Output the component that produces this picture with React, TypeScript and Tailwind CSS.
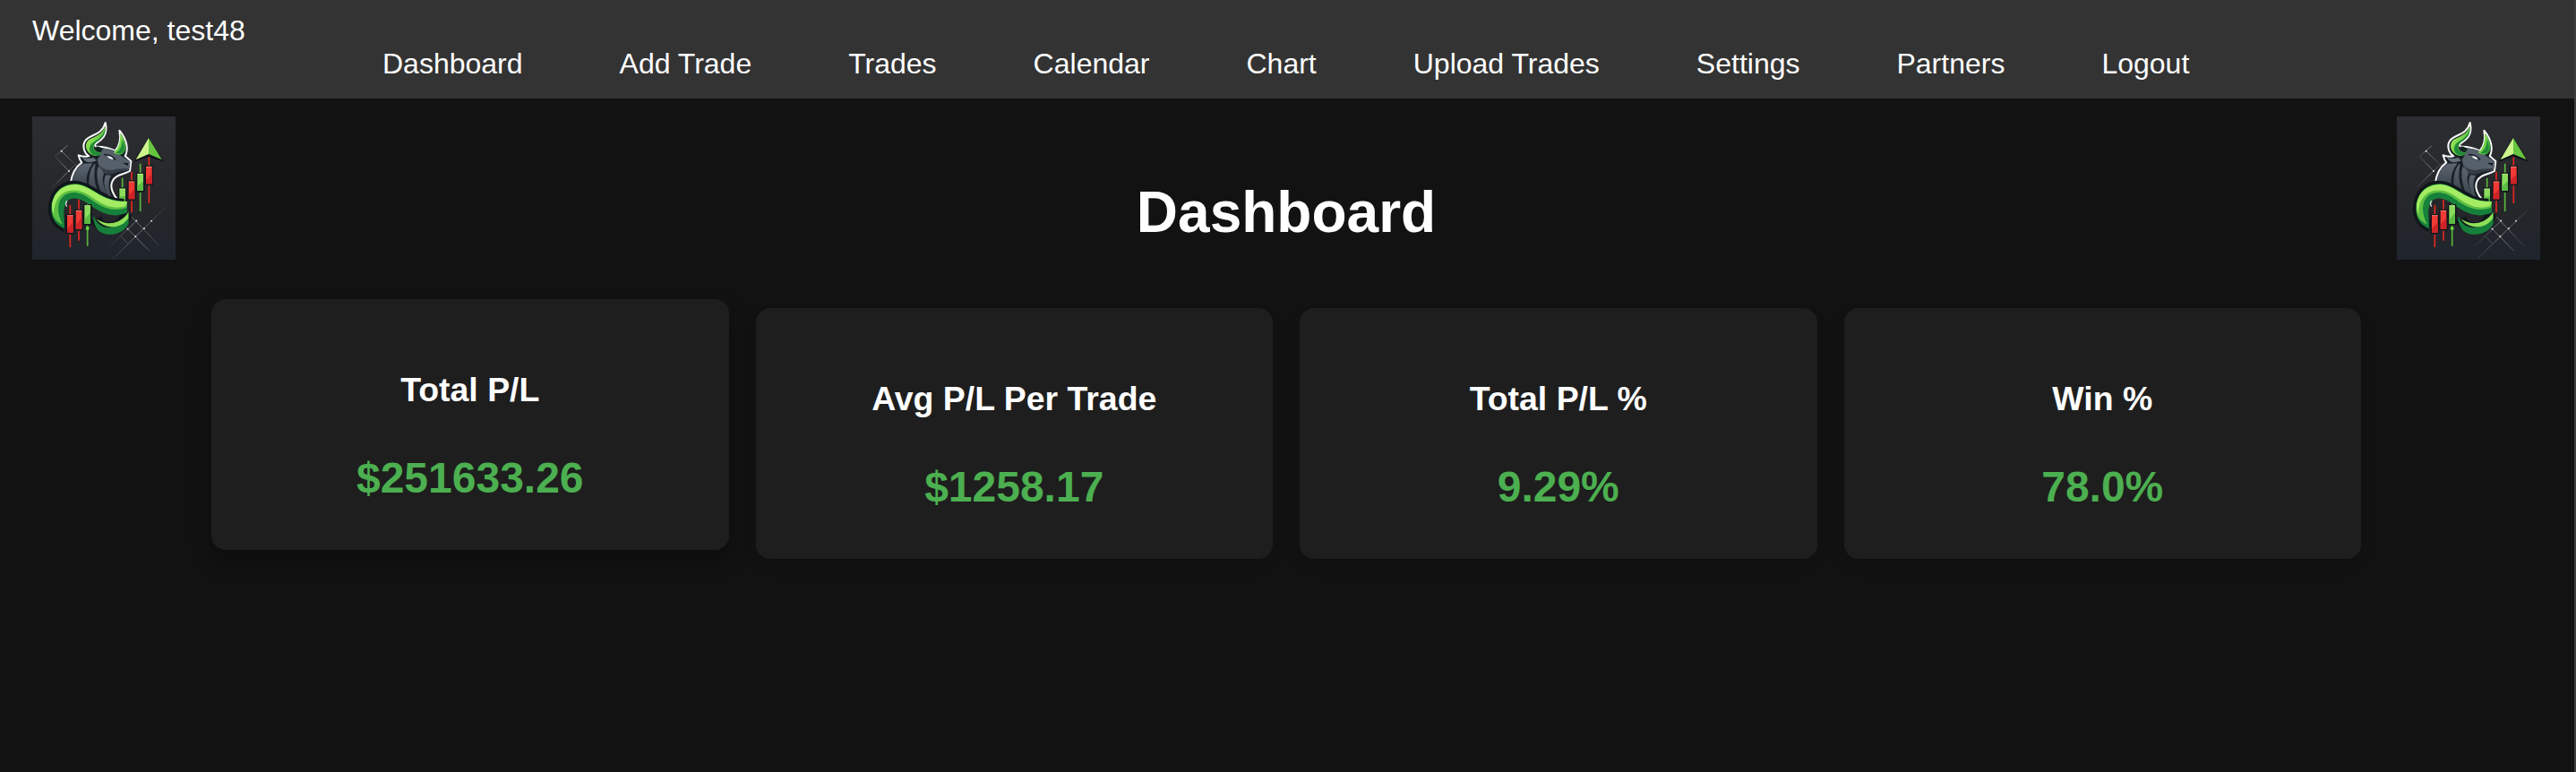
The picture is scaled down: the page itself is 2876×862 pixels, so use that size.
const links = [
  "Dashboard",
  "Add Trade",
  "Trades",
  "Calendar",
  "Chart",
  "Upload Trades",
  "Settings",
  "Partners",
  "Logout",
];

const stats = [
  { title: "Total P/L", value: "$251633.26", raised: true },
  { title: "Avg P/L Per Trade", value: "$1258.17", raised: false },
  { title: "Total P/L %", value: "9.29%", raised: false },
  { title: "Win %", value: "78.0%", raised: false },
];

// Candles of the logo: x centre, wick top, body top, body bottom, wick bottom
const backCandles = [
  { x: 302, top: 206, y1: 242, y2: 284, bottom: 284, up: true },
  { x: 333, top: 185, y1: 218, y2: 277, bottom: 322, up: false },
  { x: 362, top: 158, y1: 192, y2: 249, bottom: 318, up: true },
  { x: 391, top: 132, y1: 168, y2: 226, bottom: 291, up: false },
];

const frontCandles = [
  { x: 127, top: 297, y1: 331, y2: 389, bottom: 438, up: false },
  { x: 156, top: 278, y1: 315, y2: 377, bottom: 416, up: false },
  { x: 185, top: 296, y1: 298, y2: 360, bottom: 434, up: true },
];

function Candle({ x, top, y1, y2, bottom, up }: (typeof backCandles)[number]) {
  const fill = up ? "#8bdc5c" : "#f03a35";
  const shade = up ? "#5bbb42" : "#cf2428";
  return (
    <g>
      <rect x={x - 14} y={y1 - 4} width="28" height={y2 - y1 + 8} fill="#101419" />
      <path d={`M${x} ${top}V${y1 - 4}M${x} ${y2 + 6}V${bottom}`} stroke={up ? "#58b83c" : "#e3261f"} strokeWidth="5" />
      <rect x={x - 10} y={y1} width="20" height={y2 - y1} fill={fill} />
      <path d={`M${x - 10} ${y2 - 14}L${x + 10} ${y1 + 24}V${y2}H${x - 10}Z`} fill={shade} />
      <path d={`M${x - 10} ${y1 + 1}H${x + 10}`} stroke={up ? "#c9f2a0" : "#ffa39b"} strokeWidth="2" />
    </g>
  );
}

function Logo() {
  return (
    <svg viewBox="0 0 480 480" className="size-40 shrink-0">
      <defs>
        <linearGradient id="bg" x1="0" y1="0" x2="0" y2="1">
          <stop offset="0" stopColor="#2c2d30" />
          <stop offset="0.7" stopColor="#25262a" />
          <stop offset="1" stopColor="#1f252d" />
        </linearGradient>
        <linearGradient id="horn" x1="0" y1="0" x2="1" y2="0.8">
          <stop offset="0" stopColor="#b6f567" />
          <stop offset="0.6" stopColor="#6fd046" />
          <stop offset="1" stopColor="#1f8a35" />
        </linearGradient>
        <linearGradient id="hide" x1="0" y1="0" x2="0" y2="1">
          <stop offset="0" stopColor="#5d6670" />
          <stop offset="1" stopColor="#3d4752" />
        </linearGradient>
        <linearGradient id="fade" x1="0" y1="0" x2="1" y2="0">
          <stop offset="0" stopColor="#8a9097" stopOpacity="0.2" />
          <stop offset="0.5" stopColor="#aab0b6" />
          <stop offset="1" stopColor="#8a9097" stopOpacity="0.2" />
        </linearGradient>
      </defs>
      <rect width="480" height="480" fill="url(#bg)" />

      {/* Thin trend lines */}
      <g stroke="url(#fade)" strokeWidth="1.8" fill="none">
        <path d="M64 240L150 156M76 134L118 97M98 116L154 171M76 134L123 183" />
        <path d="M272 475L443 308M334 337L426 434M300 357L392 450M259 436L350 349M297 402L318 424" />
      </g>
      <g fill="#e8edf0">
        <circle cx="98" cy="116" r="3" />
        <circle cx="123" cy="183" r="3" />
        <circle cx="349" cy="349" r="2.8" />
        <circle cx="399" cy="350" r="2.8" />
        <circle cx="320" cy="377" r="2.8" />
        <circle cx="375" cy="375" r="2.8" />
        <circle cx="346" cy="402" r="2.8" />
      </g>

      {backCandles.map((candle) => (
        <Candle key={candle.x} {...candle} />
      ))}

      {/* Arrow head */}
      <path d="M390 76L434 147L390 132L347 147Z" fill="#101419" stroke="#101419" strokeWidth="6" />
      <path d="M390 72L434 145L390 126Z" fill="#67c540" />
      <path d="M390 72L347 145L390 126Z" fill="#cdf58c" />

      {/* Neck and head */}
      <path
        d="M128 226C132 193 147 168 166 154C158 146 157 138 155 130Q174 137 190 133C172 122 168 98 176 84C190 58 232 68 245 21C256 65 228 82 213 91Q207 97 214 101Q248 100 278 115Q300 92 292 47C318 78 323 112 311 133L331 150L327 183C307 195 279 193 268 218C259 238 272 264 288 282L258 280L128 232Z"
        fill="#1a2027"
        stroke="#f8faf9"
        strokeWidth="6"
        strokeLinejoin="round"
      />
      <path d="M133 224C138 188 154 165 173 158L203 157Q178 187 182 228Z" fill="url(#hide)" />
      <path d="M208 160Q188 185 190 228L218 247Q201 203 212 160Z" fill="url(#hide)" />
      <path d="M220 168Q211 202 228 249L252 262Q227 212 241 191Z" fill="url(#hide)" />
      <path d="M264 198Q246 231 270 280L255 269Q232 222 247 196Z" fill="url(#hide)" />
      <path d="M166 136Q180 145 205 138L216 148Q188 160 175 148Z" fill="#65707b" />
      <path
        d="M233 107Q269 106 286 121Q300 137 327 150Q331 171 320 181Q293 180 273 190Q248 199 226 177L218 145Q229 130 233 107Z"
        fill="#56606b"
      />
      <path d="M224 162Q247 188 281 176L321 174L317 183Q291 182 270 193Q238 199 224 162Z" fill="#343d47" />
      <path d="M240 128Q267 126 279 147M306 157L321 159" stroke="#11161c" strokeWidth="4" fill="none" />
      <path d="M251 133Q265 133 272 143Q257 144 251 133Z" fill="#ffffff" />
      <path d="M312 160L321 157L319 166Z" fill="#11161c" />

      {/* Horns */}
      <path d="M244 33C250 73 207 79 206 105Q209 119 231 121Q228 134 209 132C178 124 172 92 190 78C210 66 233 64 244 33Z" fill="url(#horn)" />
      <path d="M244 42C248 76 206 80 204 105Q208 120 229 123Q226 132 211 130C187 124 188 100 201 89C217 77 238 70 244 42Z" fill="#1f8a38" />
      <path d="M214 101Q208 112 229 119L236 112Q228 99 214 101Z" fill="#10251d" />
      <path d="M295 57C317 85 319 114 303 125Q289 133 272 121Q297 104 295 57Z" fill="url(#horn)" />
      <path d="M302 76Q313 102 302 119Q291 127 280 122Q304 109 302 76Z" fill="#1f8a38" />

      {/* Ribbon wrapped round the bull */}
      <path d="M112 369C70 350 66 309 79 276C96 234 139 224 180 245C223 266 244 293 307 295M214 342C231 388 304 384 314 325" stroke="#10171b" strokeWidth="38" fill="none" />
      <path d="M208 337C220 374 261 383 295 359Q316 344 323 318L323 358C306 394 260 405 228 387Q207 373 204 337Z" fill="#16803a" />
      <path d="M214 343Q251 368 289 351Q309 341 322 322L322 341C296 379 242 380 214 343Z" fill="#8fe058" />
      <path d="M108 376C77 364 63 338 64 306C66 256 102 222 150 226C207 234 232 286 318 284L318 322C268 344 229 323 190 295C157 268 122 268 111 293C100 323 110 341 108 376Z" fill="#16813a" />
      <path d="M66 304C70 250 105 227 148 227C204 233 231 289 318 285L316 306C259 324 223 296 192 275C148 242 106 253 92 284C82 308 89 338 102 362C70 348 64 326 66 304Z" fill="#5cc043" />
      <path d="M66 296C74 248 107 228 148 228C204 234 231 289 318 285L312 301C259 315 226 289 192 265C148 235 98 244 80 285Q72 302 72 328Q65 314 66 296Z" fill="#a4ec63" />
      <path d="M117 283Q109 291 116 302" stroke="#d8e0df" strokeWidth="4" fill="none" />

      {frontCandles.map((candle) => (
        <Candle key={candle.x} {...candle} />
      ))}
      <circle cx="185" cy="375" r="6" fill="#69d43d" />
    </svg>
  );
}

export default function App() {
  return (
    <div className="flex h-[862px] w-full bg-[#121212] font-['Liberation_Sans',Arial,sans-serif] text-white">
      <div className="flex min-w-0 flex-1 flex-col">
        <header className="flex h-[110px] bg-[#333333] pl-9 text-[32px] leading-9">
          <div className="w-[391px] shrink-0 pt-4">Welcome, test48</div>
          <nav className="flex gap-[108px] pt-[53px]">
            {links.map((link) => (
              <a key={link} href="#" className="whitespace-nowrap">
                {link}
              </a>
            ))}
          </nav>
        </header>

        <main className="w-[2872px]">
          <div className="flex h-[234px] items-start justify-between px-9 pt-5">
            <Logo />
            <h1 className="pt-[70px] text-[64px] leading-[74px] font-bold">Dashboard</h1>
            <Logo />
          </div>

          {/* Summary cards */}
          <section className="mx-auto grid w-[2400px] grid-cols-4 gap-[30px]">
            {stats.map((stat) => (
              <div
                key={stat.title}
                className={`flex h-[280px] flex-col items-center rounded-2xl bg-[#1e1e1e] pt-20 font-bold ${
                  stat.raised
                    ? "-translate-y-2.5 shadow-[0_12px_24px_rgba(0,0,0,0.3)]"
                    : "shadow-[0_8px_16px_rgba(0,0,0,0.1)]"
                }`}
              >
                <h3 className="text-[37.44px] leading-[43px]">{stat.title}</h3>
                <p className="mt-[49px] text-[48px] leading-[55px] text-[#4caf50]">{stat.value}</p>
              </div>
            ))}
          </section>
        </main>
      </div>
      <div className="w-0.5 bg-[#3d3d3d]" />
    </div>
  );
}
